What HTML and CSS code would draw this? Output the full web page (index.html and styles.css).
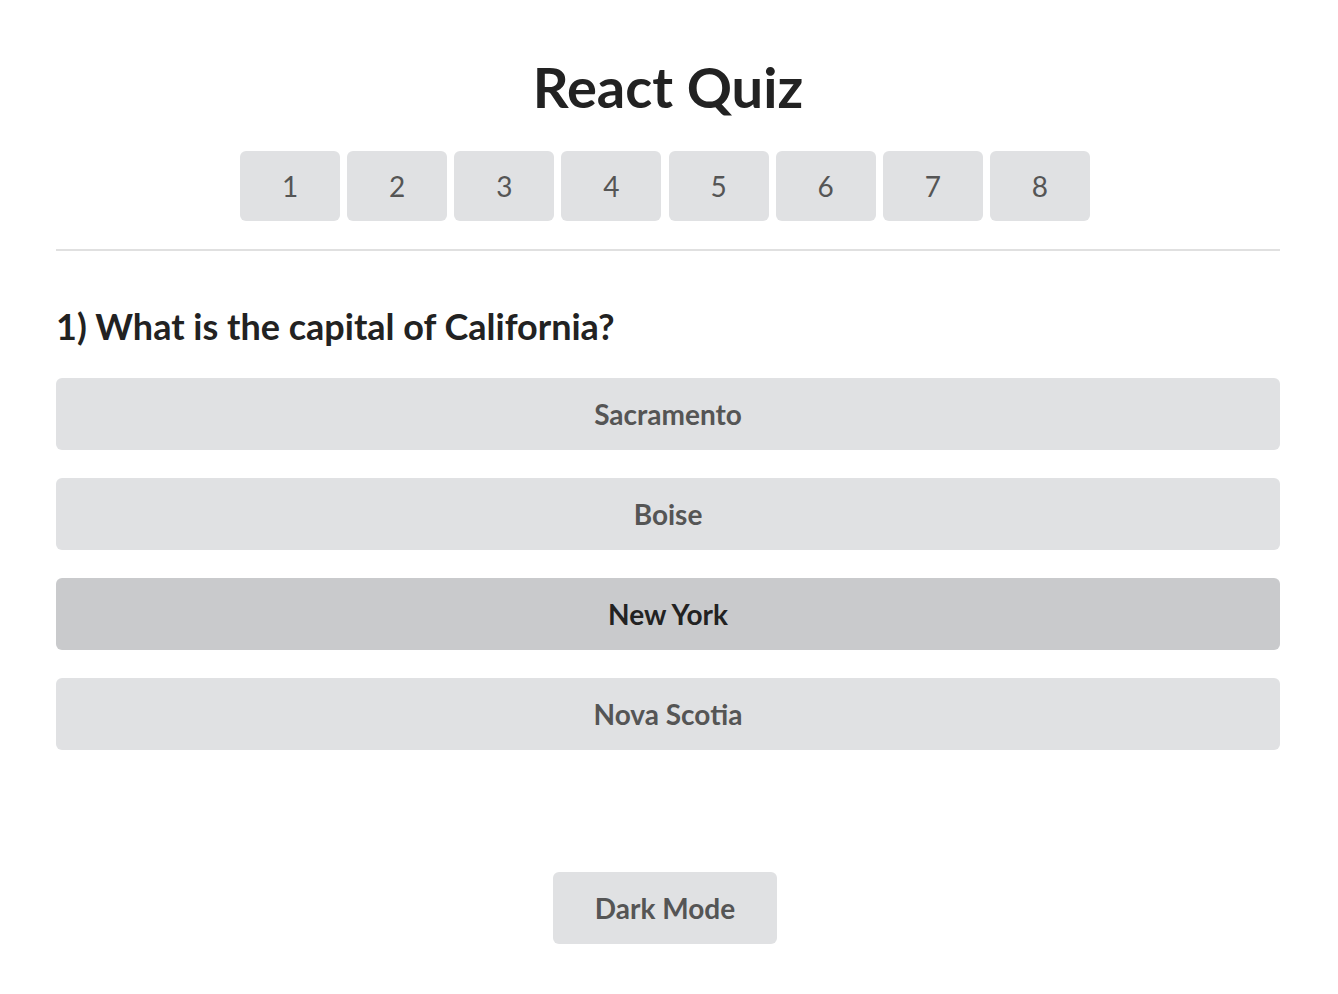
FILE: index.html
```html
<!DOCTYPE html>
<html lang="en">
<head>
<meta charset="utf-8">
<title>React Quiz</title>
<link rel="stylesheet" href="styles.css">
</head>
<body>
<div class="app">
  <h1 class="title">React Quiz</h1>
  <nav class="qnav">
    <button class="qbtn">1</button>
    <button class="qbtn">2</button>
    <button class="qbtn">3</button>
    <button class="qbtn">4</button>
    <button class="qbtn">5</button>
    <button class="qbtn">6</button>
    <button class="qbtn">7</button>
    <button class="qbtn">8</button>
  </nav>
  <hr class="divider">
  <h2 class="question">1) What is the capital of California?</h2>
  <div class="options">
    <button class="option">Sacramento</button>
    <button class="option">Boise</button>
    <button class="option selected">New York</button>
    <button class="option">Nova Scotia</button>
  </div>
  <div class="footer">
    <button class="mode">Dark Mode</button>
  </div>
</div>
</body>
</html>
```
FILE: styles.css
```css
html, body {
  margin: 0;
  padding: 0;
  background: #ffffff;
}
body {
  font-family: Lato, "Liberation Sans", sans-serif;
  color: #222222;
}
.app {
  padding: 0 58px 0 56px;
}
.title {
  margin: 0;
  padding-top: 52px;
  font-size: 56px;
  font-weight: 700;
  line-height: 70px;
  text-align: center;
  color: #222222;
}
.qnav {
  display: flex;
  justify-content: center;
  gap: 7.14px;
  margin-top: 29px;
  padding-right: 6px;
}
.qbtn {
  width: 100px;
  height: 70px;
  border: none;
  border-radius: 6px;
  background: #e0e1e3;
  color: #555555;
  font-family: Lato, "Liberation Sans", sans-serif;
  font-size: 28px;
  font-weight: 400;
  padding: 0;
}
.divider {
  border: none;
  border-top: 2px solid #e0e0e0;
  margin: 28px 0 0;
}
.question {
  margin: 52px 0 0;
  font-size: 36px;
  font-weight: 700;
  line-height: 46px;
  color: #222222;
}
.options {
  display: flex;
  flex-direction: column;
  gap: 28px;
  margin-top: 29px;
}
.option {
  height: 72px;
  border: none;
  border-radius: 6px;
  background: #e0e1e3;
  color: #555555;
  font-family: Lato, "Liberation Sans", sans-serif;
  font-size: 28px;
  font-weight: 700;
  padding: 0;
}
.option.selected {
  background: #c9cacc;
  color: #222222;
}
.footer {
  display: flex;
  justify-content: center;
  margin-top: 122px;
  padding-right: 6px;
}
.mode {
  width: 224px;
  height: 72px;
  border: none;
  border-radius: 6px;
  background: #e0e1e3;
  color: #555555;
  font-family: Lato, "Liberation Sans", sans-serif;
  font-size: 28px;
  font-weight: 700;
  padding: 0;
}
```
